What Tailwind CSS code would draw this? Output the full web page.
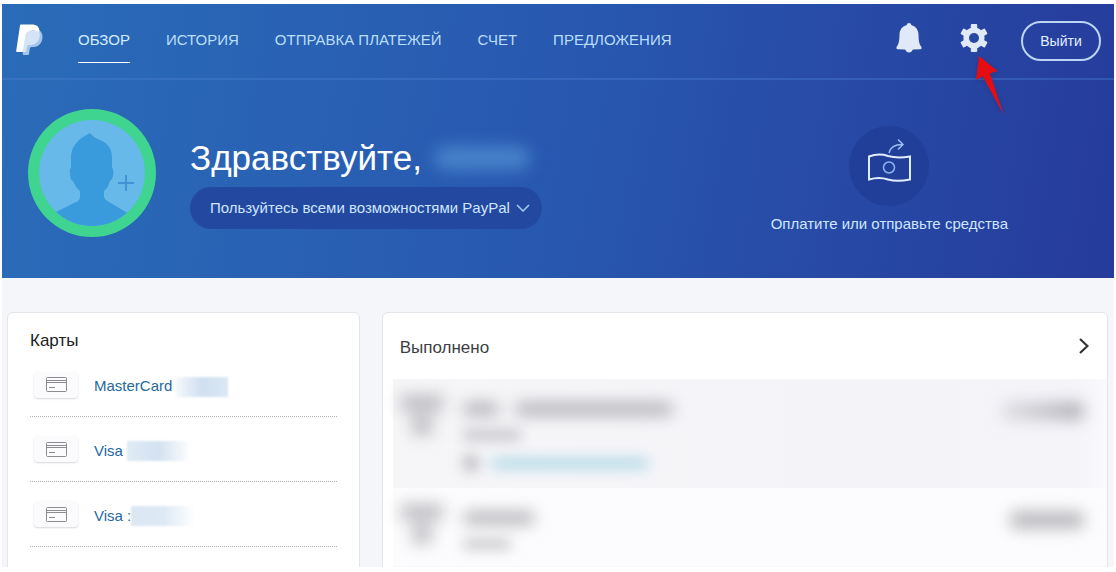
<!DOCTYPE html>
<html lang="ru">
<head>
<meta charset="utf-8">
<meta name="viewport" content="width=device-width, initial-scale=1">
<title>PayPal</title>
<script src="https://cdn.jsdelivr.net/npm/@tailwindcss/browser@4"></script>
</head>
<body class="bg-white font-['Liberation_Sans',Arial,sans-serif]">
<div class="mx-[2px] my-1 h-[563px] overflow-hidden bg-[#f5f6f9]">
  <header class="h-[274px] bg-linear-[100deg] from-[#2a6cb8] via-[#2858b0] to-[#263b9b] text-white">
    <div class="flex h-[76px] items-center border-b-2 border-[#4a7fd0]/40 pr-[13px] pb-[2px] pl-[14px]">
      <a href="#" aria-label="PayPal" class="mr-[35px] shrink-0">
        <svg class="h-8 w-[27px]" viewBox="0 0 27 32">
          <path d="M8.500 9.500 L23 6 C26 8 27 11 26.300 15 C25.200 20.500 21.500 23 17 23 L15.500 23 Q14 23 13.700 25 L13 30 Q12.800 31 12 31 L7.500 31 Q6.500 31 6.800 30 Z" fill="#a3c6ec"/>
          <path d="M9.500 7 L23 7 C24.200 10 24 12.500 23.200 14.500 C22 18.500 18.500 21 14.500 21 L12.500 21 Q11.500 21 11.200 22.500 L10 28 L6 28 Z" fill="#d3e4f6"/>
          <path d="M5 0.500 L15.500 0.500 C20.500 0.500 24 3 23.300 7.800 C19 6.300 10 5.800 9.500 11 L6.600 28 L1 28 Q0 28 0.200 27 L4 1.500 Q4.200 0.500 5 0.500 Z" fill="#ffffff"/>
        </svg>
      </a>
      <nav class="flex gap-9 text-[15px] leading-5 whitespace-nowrap text-[#b9defa]">
        <a href="#" class="border-b border-white py-3 text-[#d4ecff]">ОБЗОР</a>
        <a href="#" class="py-3">ИСТОРИЯ</a>
        <a href="#" class="py-3">ОТПРАВКА ПЛАТЕЖЕЙ</a>
        <a href="#" class="py-3">СЧЕТ</a>
        <a href="#" class="py-3">ПРЕДЛОЖЕНИЯ</a>
      </nav>
      <div class="ml-auto flex items-center pt-[2px]">
        <button type="button" aria-label="Уведомления" class="mr-[38px] -mt-[6px]">
          <svg class="h-[30px] w-[26px]" viewBox="0 0 26 30" fill="#dfe9f8">
            <path d="M10.500 2.300 Q11 0 13 0 Q15 0 15.500 2.300 C20 3.500 22.300 7 22.500 11.500 C22.700 17.500 23 21 25.500 24 Q26 26.300 24.500 26.300 L17 26.500 Q15.500 29.500 13 29.500 Q10.500 29.500 9 26.500 L1.500 26.300 Q0 26.300 0.500 24 C3 21 3.300 17.500 3.500 11.500 C3.700 7 6 3.500 10.500 2.300 Z"/>
          </svg>
        </button>
        <button type="button" aria-label="Настройки" class="relative mr-[33px] -mt-[6px]">
          <svg class="size-7" viewBox="0 0 28 28">
            <g fill="#dfe9f8">
              <rect x="10.800" y="0" width="6.400" height="28" rx="1"/>
              <rect x="10.800" y="0" width="6.400" height="28" rx="1" transform="rotate(60 14 14)"/>
              <rect x="10.800" y="0" width="6.400" height="28" rx="1" transform="rotate(120 14 14)"/>
              <circle cx="14" cy="14" r="10.600"/>
            </g>
            <circle cx="14" cy="14" r="5" fill="#2649a3"/>
          </svg>
          <svg class="pointer-events-none absolute top-[31px] left-[14px] h-[60px] w-[30px] drop-shadow-sm" viewBox="0 0 30 60">
            <path d="M5 1 L23.500 16 L16 18.500 L29.500 59.500 L8.800 21.500 L2 25 Z" fill="#e60d12"/>
          </svg>
        </button>
        <button type="button" class="h-10 w-20 rounded-full border-2 border-[#bcd5f5] text-[14px] text-[#e3efff]">Выйти</button>
      </div>
    </div>
    <div class="flex pt-7 pl-[26px]">
      <svg class="mt-px size-32 shrink-0" viewBox="0 0 128 128" role="img" aria-label="Фото профиля">
        <defs><clipPath id="face"><circle cx="64" cy="64" r="53"/></clipPath></defs>
        <circle cx="64" cy="64" r="64" fill="#3fd590"/>
        <circle cx="64" cy="64" r="53" fill="#67b9e9"/>
        <g clip-path="url(#face)">
          <path d="M62 24 Q66 29 72 31 C80 34 84 40 84 49 L84 59 Q86 60 85 67 Q84 71 82 72 Q80 79 76 82 L76 88 Q77 91 81 93 L103 106 L103 128 L22 128 L22 106 L46 94 Q52 92 52 88 L52 82 Q48 79 45 72 Q42 71 42 64 Q41 60 43 59 L43 47 C44 35 52 29 62 24 Z" fill="#399bdc"/>
        </g>
        <path d="M90 74 H106 M98 66 V82" stroke="#3f93d6" stroke-width="2"/>
      </svg>
      <div class="ml-[34px] pt-[30px]">
        <h1 class="flex items-center text-[35px] leading-10 whitespace-nowrap">Здравствуйте,
          <span class="ml-3 h-6 w-24 rounded-xl bg-[#5c9cdc]/60 blur-sm"></span>
        </h1>
        <button type="button" class="mt-[9px] flex h-[42px] items-center gap-[6px] rounded-full bg-[#2348a0] pr-3 pl-5 text-[15px] whitespace-nowrap text-[#cfe6ff]">Пользуйтесь всеми возможностями PayPal
          <svg class="h-2 w-[14px]" viewBox="0 0 14 8" fill="none" stroke="#a8cdf5" stroke-width="1.500"><path d="M1 1 L7 7 L13 1"/></svg>
        </button>
      </div>
      <a href="#" class="mr-[106px] ml-auto flex flex-col items-center pt-[18px] text-[15px] leading-5 whitespace-nowrap text-[#cfe6ff]">
        <svg class="mb-2 size-20" viewBox="0 0 80 80" fill="none">
          <circle cx="40" cy="40" r="40" fill="#213f98"/>
          <path d="M20 30.500 C27 28 33 28 39 30 Q48 32.500 61 30.500 V53.500 Q48 56 39 53.500 C33 51.500 27 51.500 20 53.500 Z" stroke="#e0ecff" stroke-width="2"/>
          <circle cx="40" cy="41.500" r="5.500" stroke="#8eb4f0" stroke-width="1.500"/>
          <path d="M40 27 Q42 18.500 53 18.500 M49 13.500 L54 18.500 L49 23.500" stroke="#9dbdf2" stroke-width="1.500"/>
        </svg>
        Оплатите или отправьте средства
      </a>
    </div>
  </header>

  <main class="grid grid-cols-[353fr_727fr] gap-[22px] pt-[34px] pr-[6px] pl-[5px]">
    <section class="h-[280px] rounded-md border border-[#e3e5ea] bg-white px-[22px] pt-4">
      <h2 class="text-[17px] leading-6 text-[#222]">Карты</h2>
      <ul class="text-[15px] text-[#25699f]">
        <li class="flex h-16 items-center border-b border-dotted border-[#b0b0b0] pt-1">
          <span class="mr-4 mb-1 ml-1 flex h-[26px] w-11 items-center justify-center rounded-sm bg-[#fbfafc] shadow-[0_1px_2px_#d8d6dc]">
            <svg class="h-[15px] w-[21px]" viewBox="0 0 21 15" fill="none" stroke="#8b8b90"><rect x=".5" y=".5" width="20" height="14" rx="1"/><path d="M1 3.500 H20 M1 5.500 H20 M3 10.500 H9"/></svg>
          </span>
          <a href="#">MasterCard</a>
          <span class="ml-1 h-5 w-[52px] bg-linear-to-r from-[#f4f8fc] via-[#d0e0f0] to-[#dbe8f4] blur-[1px]"></span>
        </li>
        <li class="flex h-[65px] items-center border-b border-dotted border-[#b0b0b0] pt-1">
          <span class="mr-4 mb-1 ml-1 flex h-[26px] w-11 items-center justify-center rounded-sm bg-[#fbfafc] shadow-[0_1px_2px_#d8d6dc]">
            <svg class="h-[15px] w-[21px]" viewBox="0 0 21 15" fill="none" stroke="#8b8b90"><rect x=".5" y=".5" width="20" height="14" rx="1"/><path d="M1 3.500 H20 M1 5.500 H20 M3 10.500 H9"/></svg>
          </span>
          <a href="#">Visa</a>
          <span class="ml-1 h-5 w-16 bg-linear-to-r from-[#e0ebf5] via-[#d3e2f1] to-white blur-[1px]"></span>
        </li>
        <li class="flex h-[65px] items-center border-b border-dotted border-[#b0b0b0] pt-1">
          <span class="mr-4 mb-1 ml-1 flex h-[26px] w-11 items-center justify-center rounded-sm bg-[#fbfafc] shadow-[0_1px_2px_#d8d6dc]">
            <svg class="h-[15px] w-[21px]" viewBox="0 0 21 15" fill="none" stroke="#8b8b90"><rect x=".5" y=".5" width="20" height="14" rx="1"/><path d="M1 3.500 H20 M1 5.500 H20 M3 10.500 H9"/></svg>
          </span>
          <a href="#">Visa :</a>
          <span class="h-5 w-16 bg-linear-to-r from-[#dbe7f3] via-[#dde9f5] to-white blur-[1px]"></span>
        </li>
      </ul>
    </section>

    <section class="h-[280px] rounded-md border border-[#e3e5ea] bg-white pl-[10px]">
      <div class="flex h-[66px] items-center justify-between pr-[18px] pl-[7px]">
        <h2 class="pt-1 text-[17px] text-[#3c3f44]">Выполнено</h2>
        <a href="#" aria-label="Показать все">
          <svg class="h-4 w-[10px]" viewBox="0 0 10 16" fill="none" stroke="#333" stroke-width="2.200"><path d="M1 1 L8.500 8 L1 15"/></svg>
        </a>
      </div>
      <!-- Hidden transactions -->
      <div aria-hidden="true">
        <div class="flex h-[109px] bg-linear-to-r from-[#f6f6f8] via-[#f4f4f9] via-95% to-[#fafafd] pt-4 pr-6 pl-2">
          <div class="flex w-[42px] flex-col items-center gap-1 blur-[8px]">
            <span class="h-4 w-full bg-[#bcbcc1]"></span>
            <span class="h-5 w-5 bg-[#bebec3]"></span>
          </div>
          <div class="ml-5 pt-2">
            <div class="flex gap-4 blur-[8px]">
              <span class="h-3 w-9 rounded-full bg-[#acacb2]"></span>
              <span class="h-3 w-[158px] rounded-full bg-[#acacb2]"></span>
            </div>
            <div class="mt-4 h-2 w-[58px] rounded-full bg-[#b4b4ba] blur-[7px]"></div>
            <div class="mt-5 flex gap-3 blur-[7px]">
              <span class="-mt-1 h-4 w-4 rounded-full bg-[#b4b4ba]"></span>
              <span class="h-[9px] w-[158px] rounded-full bg-[#a6d2e3]"></span>
            </div>
          </div>
          <div class="mt-2 ml-auto h-4 w-20 bg-linear-to-r from-[#dcdce1] to-[#a6a6ac] blur-[8px]"></div>
        </div>
        <div class="flex h-[78px] bg-[#fcfcfe] pt-4 pr-6 pl-2">
          <div class="flex w-[42px] flex-col items-center gap-1 blur-[8px]">
            <span class="h-4 w-full bg-[#bebec2]"></span>
            <span class="h-5 w-5 bg-[#c2c2c6]"></span>
          </div>
          <div class="ml-5 pt-2">
            <div class="h-3 w-[72px] rounded-full bg-[#aeaeb3] blur-[8px]"></div>
            <div class="mt-4 h-2 w-12 rounded-full bg-[#b6b6ba] blur-[7px]"></div>
          </div>
          <div class="mt-2 ml-auto h-4 w-[72px] bg-[#b4b4b8] blur-[8px]"></div>
        </div>
        <div class="h-5 bg-[#f8f8fb]"></div>
      </div>
    </section>
  </main>
</div>
</body>
</html>
